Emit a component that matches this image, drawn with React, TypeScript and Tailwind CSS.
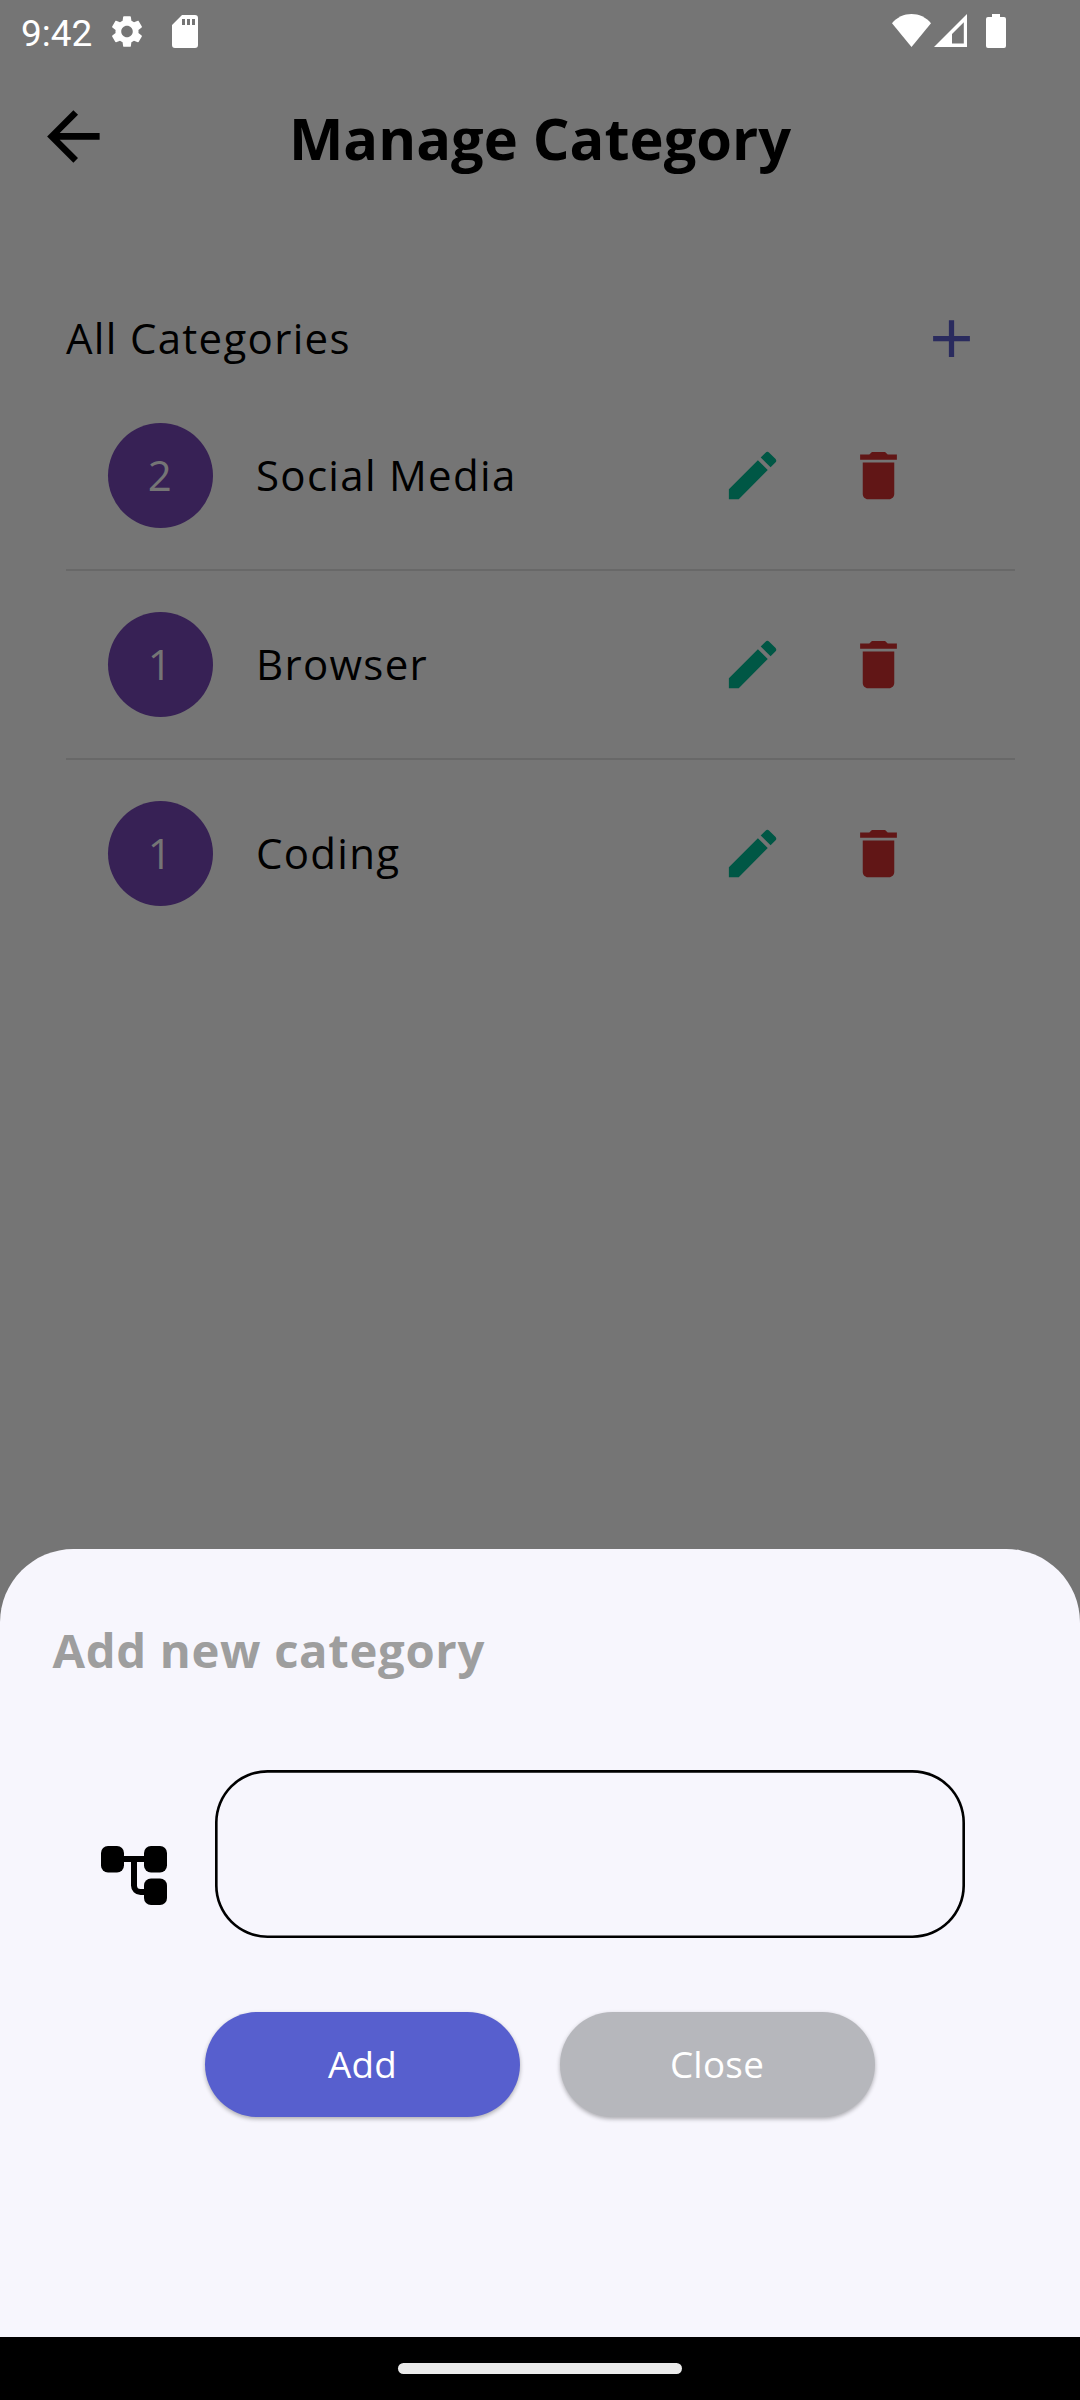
type IconProps = { className?: string };

const ArrowBackIcon = ({ className }: IconProps) => (
  <svg viewBox="0 0 24 24" fill="currentColor" className={className}>
    <path d="M20 11H7.83l5.59-5.59L12 4l-8 8 8 8 1.41-1.41L7.83 13H20v-2z" />
  </svg>
);

const PlusIcon = ({ className }: IconProps) => (
  <svg viewBox="0 0 24 24" fill="currentColor" className={className}>
    <path d="M19 13h-6v6h-2v-6H5v-2h6V5h2v6h6v2z" />
  </svg>
);

const EditIcon = ({ className }: IconProps) => (
  <svg viewBox="0 0 24 24" fill="currentColor" className={className}>
    <path d="M3 17.25V21h3.75L17.81 9.94l-3.75-3.75L3 17.25zM20.71 7.04a.996.996 0 0 0 0-1.41l-2.34-2.34a.996.996 0 0 0-1.41 0l-1.83 1.83 3.75 3.75 1.83-1.83z" />
  </svg>
);

const DeleteIcon = ({ className }: IconProps) => (
  <svg viewBox="0 0 24 24" fill="currentColor" className={className}>
    <path d="M6 19c0 1.1.9 2 2 2h8c1.1 0 2-.9 2-2V7H6v12zM19 4h-3.5l-1-1h-5l-1 1H5v2h14V4z" />
  </svg>
);

const GearIcon = ({ className }: IconProps) => (
  <svg viewBox="2 2 20 20" fill="currentColor" className={className}>
    <path d="M19.14 12.94c.04-.3.06-.61.06-.94 0-.32-.02-.64-.07-.94l2.03-1.58c.18-.14.23-.41.12-.61l-1.92-3.32c-.12-.22-.37-.29-.59-.22l-2.39.96c-.5-.38-1.03-.7-1.62-.94l-.36-2.54c-.04-.24-.24-.41-.48-.41h-3.84c-.24 0-.43.17-.47.41l-.36 2.54c-.59.24-1.13.57-1.62.94l-2.39-.96c-.22-.08-.47 0-.59.22L2.74 8.87c-.12.21-.08.47.12.61l2.03 1.58c-.05.3-.09.63-.09.94s.02.64.07.94l-2.03 1.58c-.18.14-.23.41-.12.61l1.92 3.32c.12.22.37.29.59.22l2.39-.96c.5.38 1.03.7 1.62.94l.36 2.54c.05.24.24.41.48.41h3.84c.24 0 .44-.17.47-.41l.36-2.54c.59-.24 1.13-.56 1.62-.94l2.39.96c.22.08.47 0 .59-.22l1.92-3.32c.12-.22.07-.47-.12-.61l-2.01-1.58zM12 15.6c-1.98 0-3.6-1.62-3.6-3.6s1.62-3.6 3.6-3.6 3.6 1.62 3.6 3.6-1.62 3.6-3.6 3.6z" />
  </svg>
);

const SdCardIcon = ({ className }: IconProps) => (
  <svg viewBox="0 0 26 33" fill="currentColor" className={className}>
    <path
      fillRule="evenodd"
      d="M10 0H23a3 3 0 0 1 3 3V30a3 3 0 0 1-3 3H3a3 3 0 0 1-3-3V10zM10 4V10h3V4zM15 4V10h3V4zM20 4V10h3V4z"
    />
  </svg>
);

const WifiIcon = ({ className }: IconProps) => (
  <svg viewBox="0 0 39 33" fill="currentColor" className={className}>
    <path d="M0 9.2C5 3.2 12 0 19.5 0S34 3.2 39 9.2L19.5 33z" />
  </svg>
);

const SignalIcon = ({ className }: IconProps) => (
  <svg viewBox="0 0 33 33" fill="currentColor" className={className}>
    <path fillRule="evenodd" d="M33 0V33H0zM29.8 8.2L18 20V29.6H29.8z" />
  </svg>
);

const BatteryIcon = ({ className }: IconProps) => (
  <svg viewBox="0 0 20 34" fill="currentColor" className={className}>
    <path d="M6 0H14V3H18a2 2 0 0 1 2 2V32a2 2 0 0 1-2 2H2a2 2 0 0 1-2-2V5a2 2 0 0 1 2-2H6z" />
  </svg>
);

const TreeIcon = ({ className }: IconProps) => (
  <svg viewBox="0 0 66 59" className={className}>
    <rect x="0" y="0" width="23" height="26.5" rx="7" />
    <rect x="43" y="0" width="23" height="26.5" rx="7" />
    <rect x="43" y="32.5" width="23" height="26.5" rx="7" />
    <path d="M20 13H46M33 13V39.5a6.5 6.5 0 0 0 6.5 6.5H46" fill="none" stroke="currentColor" strokeWidth="6" />
  </svg>
);

const categories = [
  { name: "Social Media", count: 2 },
  { name: "Browser", count: 1 },
  { name: "Coding", count: 1 },
];

function StatusBar() {
  return (
    <div className="flex h-[63px] items-start pl-[21px] pr-[74px] text-white">
      <span className="mt-3 w-[90px] font-[Roboto,sans-serif] text-[37px] leading-[43px]">9:42</span>
      <GearIcon className="mt-[15px] h-[33px] w-[32px]" />
      <SdCardIcon className="ml-[29px] mt-[15px] h-[33px] w-[26px]" />
      <div className="ml-auto mt-[14px] flex items-start">
        <WifiIcon className="h-[33px] w-[39px]" />
        <SignalIcon className="ml-[3px] h-[33px] w-[33px]" />
        <BatteryIcon className="ml-[19px] h-[34px] w-5" />
      </div>
    </div>
  );
}

function CategoryRow({ name, count, last }: { name: string; count: number; last: boolean }) {
  return (
    <li className={last ? "h-[189px] border-b-2 border-transparent" : "h-[189px] border-b-2 border-[#686868]"}>
      <div className="flex h-full items-center pl-[42px] pr-[105.5px]">
        <span className="flex h-[105px] w-[105px] items-center justify-center rounded-full bg-[#372155] pb-0.5 text-[#757575]">
          {count}
        </span>
        <span className="ml-[43px] flex-1 pb-0.5">{name}</span>
        <button className="mr-[63px] text-[#005745]">
          <EditIcon className="h-[63px] w-[63px]" />
        </button>
        <button className="text-[#611616]">
          <DeleteIcon className="h-[63px] w-[63px]" />
        </button>
      </div>
    </li>
  );
}

function AddCategorySheet() {
  return (
    <section className="absolute inset-x-0 bottom-[63px] flex h-[787.6px] flex-col rounded-t-[73.5px] bg-[#f7f6fd]">
      <h2 className="ml-[52.5px] mt-[68.6px] text-[47.25px] font-bold leading-[64px] tracking-[0.66px] text-[#9e9e9e]">
        Add new category
      </h2>
      <div className="ml-[101px] mt-[88px] flex items-start">
        <TreeIcon className="mt-[76px] h-[59px] w-[66px]" />
        <input className="ml-12 h-[168px] w-[749.5px] rounded-[52.5px] bg-transparent px-10 text-[42px] shadow-[inset_0_0_0_2.625px_#000] outline-none" />
      </div>
      <div className="ml-[205px] mt-[74px] flex gap-[39.5px] text-[36.75px] leading-[50px] tracking-[0.3px] text-white">
        <button className="h-[105px] w-[315px] rounded-full bg-[#575fce] pb-0.5 shadow-[0_2px_4px_rgba(0,0,0,0.3)]">
          Add
        </button>
        <button className="h-[105px] w-[315px] rounded-full bg-[#b6b7bc] pb-0.5 shadow-[0_2px_4px_rgba(0,0,0,0.3)]">
          Close
        </button>
      </div>
    </section>
  );
}

export default function App() {
  return (
    <div className="relative flex h-[2400px] w-[1080px] flex-col overflow-hidden bg-[#757575] font-['Open_Sans',sans-serif] text-black">
      <StatusBar />
      <header className="grid h-[147px] grid-cols-[148px_1fr_148px] items-center">
        <button className="flex justify-center pr-0.5">
          <ArrowBackIcon className="h-[78.75px] w-[78.75px]" />
        </button>
        <h1 className="mt-0.5 text-center text-[57.75px] font-bold leading-[78px]">Manage Category</h1>
      </header>
      <main className="ml-[66px] mt-[86px] w-[949px] text-[42px] leading-[57px] tracking-[1.31px]">
        <div className="flex h-[85px] items-center justify-between pr-[32px]">
          <h2 className="pb-0.5">All Categories</h2>
          <button className="text-[#2a2b5e]">
            <PlusIcon className="h-[63px] w-[63px]" />
          </button>
        </div>
        <ul className="mt-px">
          {categories.map((category, i) => (
            <CategoryRow key={i} name={category.name} count={category.count} last={i === categories.length - 1} />
          ))}
        </ul>
      </main>
      <AddCategorySheet />
      <nav className="absolute inset-x-0 bottom-0 flex h-[63px] justify-center bg-black pt-[26px]">
        <span className="h-[11px] w-[284px] rounded-full bg-[#ebebeb]" />
      </nav>
    </div>
  );
}
